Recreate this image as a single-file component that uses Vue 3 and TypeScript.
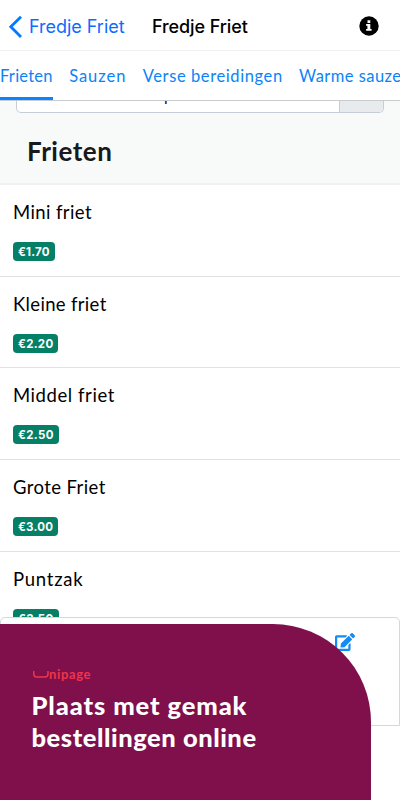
<script setup lang="ts">
interface Tab { label: string; spacing: number }
interface Item { name: string; price: string; nameSpacing: number; priceSpacing: number }

const tabs: Tab[] = [
  { label: 'Frieten', spacing: 0.25 },
  { label: 'Sauzen', spacing: 0.95 },
  { label: 'Verse bereidingen', spacing: 0.6 },
  { label: 'Warme sauzen', spacing: 0.45 },
]

const items: Item[] = [
  { name: 'Mini friet', price: '€1.70', nameSpacing: 0.4, priceSpacing: 0.2 },
  { name: 'Kleine friet', price: '€2.20', nameSpacing: 0.33, priceSpacing: 0.3 },
  { name: 'Middel friet', price: '€2.50', nameSpacing: 0.57, priceSpacing: 0.35 },
  { name: 'Grote Friet', price: '€3.00', nameSpacing: 0.4, priceSpacing: 0.25 },
  { name: 'Puntzak', price: '€3.50', nameSpacing: 0.75, priceSpacing: 0.35 },
]
</script>

<template>
  <div class="screen">
    <header class="bar">
      <a class="back">
        <svg width="14" height="24" viewBox="0 0 14 24"><path d="M13 1.700 2.800 11.800 13 21.900" fill="none" stroke="#007aff" stroke-width="2.800" /></svg>
        <span>Fredje Friet</span>
      </a>
      <h1 class="title">Fredje Friet</h1>
      <svg class="info" width="20" height="20" viewBox="0 0 20 20">
        <circle cx="10" cy="10" r="9.7" fill="#000" />
        <path d="M8.500 4.300h2.800v2.600H8.500zM7.100 8h4.200v5h1.300v1.800H7.100V13h1.300V9.800H7.100z" fill="#fff" />
      </svg>
    </header>

    <nav class="tabs">
      <a v-for="(t, i) in tabs" :key="t.label" class="tab" :class="{ active: i === 0 }" :style="{ letterSpacing: t.spacing + 'px' }">{{ t.label }}</a>
    </nav>

    <section class="intro">
      <div class="search">
        <div class="field"><span>Zoek een product</span></div>
        <div class="addon"></div>
      </div>
      <h2>Frieten</h2>
    </section>

    <ul class="list">
      <li v-for="item in items" :key="item.name">
        <div class="name" :style="{ letterSpacing: item.nameSpacing + 'px' }">{{ item.name }}</div>
        <span class="price" :style="{ letterSpacing: item.priceSpacing + 'px' }">{{ item.price }}</span>
      </li>
    </ul>

    <div class="sheet">
      <svg class="edit" width="20" height="18" viewBox="0 0 576 512">
        <path fill="#158bf5" d="M402.6 83.2l90.2 90.2c3.8 3.8 3.8 10 0 13.800L274.4 405.600l-92.800 10.300c-12.400 1.400-22.900-9.100-21.500-21.500l10.300-92.800L388.800 83.200c3.800-3.800 10-3.800 13.800 0zm162-22.900l-48.800-48.800c-15.200-15.200-39.900-15.200-55.200 0l-35.400 35.400c-3.800 3.800-3.800 10 0 13.800l90.200 90.200c3.800 3.800 10 3.800 13.800 0l35.400-35.400c15.200-15.300 15.200-40 0-55.200zM384 346.200V448H64V128h229.800c3.200 0 6.200-1.300 8.500-3.500l40-40c7.600-7.600 2.200-20.500-8.500-20.500H48C21.500 64 0 85.500 0 112v352c0 26.500 21.500 48 48 48h352c26.500 0 48-21.500 48-48V306.200c0-10.700-12.900-16-20.500-8.500l-40 40c-2.200 2.300-3.500 5.300-3.500 8.500z" />
      </svg>
    </div>

    <aside class="promo">
      <div class="brand">
        <svg width="16" height="9" viewBox="0 0 16 9"><path d="M.8 1v3Q.8 7 3.500 7h8.500Q15 7 15 4V1" fill="none" stroke="#f0344a" stroke-width="1.500" /></svg>
        <span>nipage</span>
      </div>
      <p><span class="first">Plaats met gemak</span><br /><span class="second">bestellingen online</span></p>
    </aside>
  </div>
</template>

<style>
body { margin: 0; background: #fff; }
</style>

<style scoped>
* { box-sizing: border-box; }
.screen { position: relative; width: 400px; height: 800px; overflow: hidden; background: #fff; font-family: Lato, "Liberation Sans", sans-serif; color: #111418; }
.bar { height: 51px; border-bottom: 1px solid #f0f0f0; display: flex; align-items: center; padding: 3px 21px 0 8px; font-family: Inter, sans-serif; font-size: 18px; }
.back { display: flex; align-items: center; width: 144px; color: #0b6cff; white-space: nowrap; }
.back span { margin-left: 7px; letter-spacing: -0.03px; }
.title { margin: 0; font-size: 18px; font-weight: 500; color: #000; letter-spacing: -0.1px; }
.info { margin-left: auto; position: relative; top: -1px; }
.tabs { height: 50px; border-bottom: 1px solid #c9ccce; display: flex; gap: 16.4px; overflow: hidden; white-space: nowrap; color: #0a84f5; font-size: 16.5px; }
.tab { height: 49px; line-height: 51px; flex: none; }
.active { border-bottom: 3px solid #0a84ff; }
.intro { height: 84px; background: #f8faf9; border-bottom: 2px solid #f0f2f2; padding: 0 16px; }
.search { height: 12px; display: flex; border: 1px solid #c5cdd6; border-top: 0; border-radius: 0 0 5px 5px; overflow: hidden; background: #fff; }
.field { flex: 1; padding-left: 78px; line-height: 16px; font-size: 16px; }
.field span { display: block; margin-top: -14px; }
.addon { width: 44px; background: #e7ebee; border-left: 1px solid #c5cdd6; }
h2 { margin: 21px 0 0 11px; font-size: 26px; line-height: 34px; font-weight: 700; color: #161a1f; letter-spacing: 0.5px; }
.list { list-style: none; margin: 0; padding: 0; }
.list li { height: 91.7px; border-bottom: 1px solid #dfe1e3; padding: 14px 13px 0; }
.name { font-size: 18.5px; line-height: 26px; color: #000; }
.price { display: block; width: max-content; height: 19px; margin-top: 17px; padding: 0 5px; border-radius: 4px; background: #058067; color: #fff; font-family: Inter, sans-serif; font-size: 11.5px; font-weight: 700; line-height: 21px; }
.sheet { position: absolute; left: 0; top: 617px; width: 400px; height: 109px; border: 1px solid #d7d7d7; border-radius: 5px 5px 0 0; background: #fff; }
.edit { position: absolute; left: 334px; top: 15px; }
.promo { position: absolute; left: 0; top: 624px; width: 370.5px; height: 176px; background: #7f104c; border-top-right-radius: 98px; padding: 42px 31px 0; color: #fff; }
.brand { display: flex; align-items: center; height: 16px; color: #f0344a; font-size: 13px; font-weight: 700; letter-spacing: 0.65px; padding-left: 2px; }
.promo p { margin: 7px 0 0; padding-left: 0.5px; font-size: 25.5px; line-height: 32px; font-weight: 900; white-space: nowrap; }
.first { letter-spacing: 0.9px; }
.second { letter-spacing: 0.55px; }
</style>
